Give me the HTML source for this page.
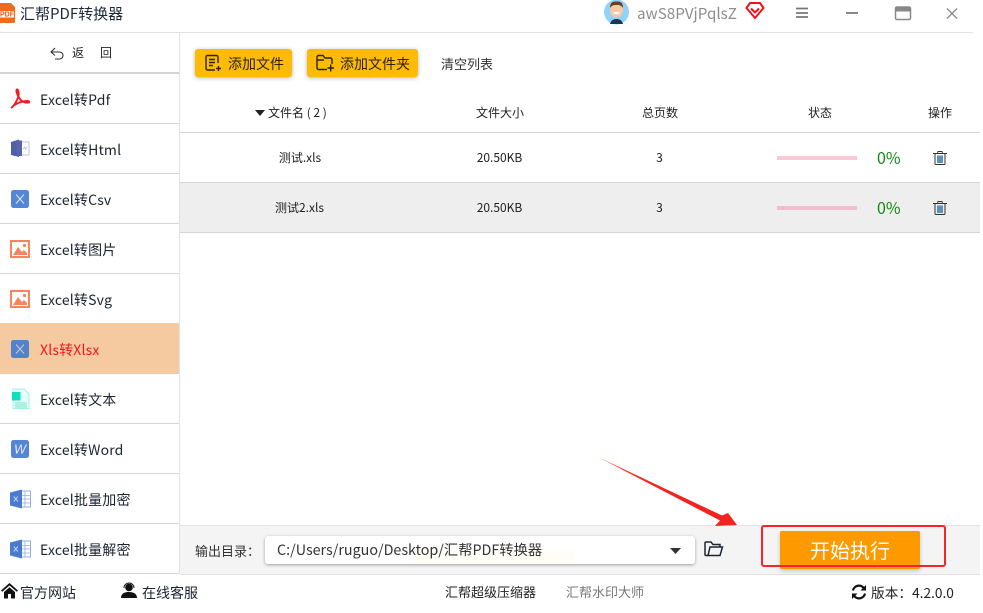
<!DOCTYPE html>
<html lang="zh"><head><meta charset="utf-8"><style>
html,body{margin:0;padding:0;background:#fff}
#p{position:relative;width:983px;height:613px;overflow:hidden;background:#fff;font-family:"Noto Sans CJK SC","Liberation Sans",sans-serif;color:#222;font-size:13px}
#p div,#p span.a,#p svg{position:absolute}
.t{white-space:nowrap;line-height:20px}
.l{background:#d5d5d5;height:1px}
.nm{left:40px;font-size:14px;white-space:nowrap;line-height:20px;color:#1c2430;letter-spacing:.18px}
.btn{background:#fdbb04;border-radius:3px;box-shadow:0 1px 4px rgba(0,0,0,.3);height:28px;top:49px}
.c{text-align:center;white-space:nowrap;line-height:20px;font-size:12px}
</style></head><body><div id="p">

<!-- logo -->
<svg style="left:0;top:2px" width="16" height="22" viewBox="0 0 16 22"><path d="M-4 1H11L15 5V19a2 2 0 0 1-2 2H-4z" fill="#ef6a1c"/><rect x="-2" y="9" width="16" height="6.500" fill="#fff"/><text x="0" y="14.700" font-family="Liberation Sans" font-size="7" font-weight="700" fill="#e8541a">PDF</text></svg>
<div class="t" style="left:20px;top:3px;font-size:15px;line-height:22px;color:#1e2a38">汇帮PDF转换器</div>

<!-- avatar -->
<svg style="left:604px;top:0" width="26" height="25" viewBox="0 0 26 25"><circle cx="12.5" cy="12" r="12.5" fill="#8fd3f8"/><path d="M6 24c1-4 4-5 6.500-5s5.500 1 6.500 5z" fill="#1d3557"/><ellipse cx="12.500" cy="10" rx="6.500" ry="7.500" fill="#f6c9a4"/><path d="M6 8c0-6 3-6.500 6.500-6.500S19 2 19 8c-2-3-4-3-6.500-3S8 5 6 8z" fill="#6b3d23"/><path d="M9 12c1 3 6 3 7 0z" fill="#fff"/></svg>
<div class="t" style="left:637px;top:3px;font-size:15.200px;color:#8d8d8d">awS8PVjPqlsZ</div>
<svg style="left:745px;top:1px" width="20" height="19" viewBox="0 0 20 19"><path d="M5 2H15L18.500 7 10 17 1.500 7z" fill="none" stroke="#f0101c" stroke-width="2"/><path d="M6 7.500l4 4 4-4" fill="none" stroke="#f0101c" stroke-width="2"/></svg>

<!-- window controls -->
<svg style="left:790px;top:0" width="190" height="30" viewBox="0 0 190 30" fill="none"><path d="M6 8.500H18M6 13H18M6 17H18" stroke="#777" stroke-width="1.800"/><path d="M56 13H68" stroke="#888" stroke-width="2"/><rect x="105.500" y="7" width="15" height="12.500" rx="1.500" stroke="#888" stroke-width="1.500"/><rect x="105" y="7" width="16" height="4.500" fill="#888"/><path d="M157 8.500L167 18.500M167 8.500L157 18.500" stroke="#888" stroke-width="1.300"/></svg>

<div style="left:0;top:32px;width:973px;height:1px;background:#e2e2e2"></div>

<!-- sidebar -->
<div style="left:179px;top:33px;width:1px;height:541px;background:#e2e2e2"></div>
<svg style="left:49px;top:46px" width="16" height="14" viewBox="0 0 16 14" fill="none"><path d="M6 2L2 6 6 9.500M2 6H10.500a3.500 3.500 0 0 1 0 7H6" stroke="#333" stroke-width="1.100"/></svg>
<div class="t" style="left:72px;top:43px;font-size:12px;color:#222">返</div>
<div class="t" style="left:100px;top:43px;font-size:12px;color:#222">回</div>
<div style="left:0;top:72px;width:179px;height:2px;background:#d5d5d5"></div>
<div class="l" style="left:0;top:123px;width:179px"></div>
<div class="l" style="left:0;top:173px;width:179px"></div>
<div class="l" style="left:0;top:223px;width:179px"></div>
<div class="l" style="left:0;top:273px;width:179px"></div>
<div style="left:0;top:323px;width:179px;height:51px;background:#f6caa0"></div>
<div class="l" style="left:0;top:423px;width:179px"></div>
<div class="l" style="left:0;top:473px;width:179px"></div>
<div class="l" style="left:0;top:523px;width:179px"></div>
<div class="l" style="left:0;top:573px;width:179px"></div>

<div class="nm" style="top:90px">Excel转Pdf</div>
<div class="nm" style="top:140px">Excel转Html</div>
<div class="nm" style="top:190px">Excel转Csv</div>
<div class="nm" style="top:240px">Excel转图片</div>
<div class="nm" style="top:290px">Excel转Svg</div>
<div class="nm" style="top:340px;color:#f5141c">Xls转Xlsx</div>
<div class="nm" style="top:390px">Excel转文本</div>
<div class="nm" style="top:440px">Excel转Word</div>
<div class="nm" style="top:490px">Excel批量加密</div>
<div class="nm" style="top:540px">Excel批量解密</div>

<!-- sidebar icons -->
<svg style="left:9px;top:88px" width="22" height="22" viewBox="0 0 22 22" fill="none"><path d="M2 20C5 18 8 13 9.500 8 10 5 9.500 1.500 8 1.500 6.500 2 8 7 11 11c2 3 6 4 9 3.500 1-.5 0-2-3-1.500-4 .5-9 2-12 4.500" stroke="#f01f24" stroke-width="1.900"/></svg>
<svg style="left:11px;top:139px" width="19" height="19" viewBox="0 0 19 19"><rect x="8" y="3" width="10" height="13" fill="#fff" stroke="#b8c2e6"/><path d="M0 3L8 .5V18L0 16z" fill="#4f5fa8"/><rect x="5" y="1.500" width="6" height="15.500" fill="#5663ad"/><path d="M12 10l1.500-2 1 2 1.500-2" stroke="#a8b4dc" fill="none" stroke-width=".7"/></svg>
<svg style="left:11px;top:190px" width="18" height="18" viewBox="0 0 18 18"><rect width="18" height="18" rx="2.500" fill="#5486d6"/><path d="M5 4.500L13 13.500M13 4.500L5 13.500" stroke="#dce7f8" stroke-width="1"/></svg>
<svg style="left:10px;top:240px" width="20" height="18" viewBox="0 0 20 18"><rect width="20" height="18" fill="#f7835f"/><rect x="2" y="2" width="16" height="14" fill="#fff"/><path d="M3 15L8 7l4 5 2-2 3 3v2z" fill="#f7835f"/><circle cx="14.500" cy="5.500" r="1.600" fill="#f7835f"/></svg>
<svg style="left:10px;top:290px" width="20" height="18" viewBox="0 0 20 18"><rect width="20" height="18" fill="#f7835f"/><rect x="2" y="2" width="16" height="14" fill="#fff"/><path d="M3 15L8 7l4 5 2-2 3 3v2z" fill="#f7835f"/><circle cx="14.500" cy="5.500" r="1.600" fill="#f7835f"/></svg>
<svg style="left:11px;top:340px" width="18" height="18" viewBox="0 0 18 18"><rect width="18" height="18" rx="2.500" fill="#5282cc"/><path d="M5 4.500L13 13.500M13 4.500L5 13.500" stroke="#c9c6c0" stroke-width="1"/></svg>
<svg style="left:11px;top:388px" width="19" height="22" viewBox="0 0 19 22" fill="none"><path d="M2 1H13L18 6V20.500H2z" fill="#e9fdf8" stroke="#9ef3de"/><rect x="1" y="4" width="8.500" height="8.500" fill="#0de0bb"/><path d="M4 15H16M4 17H16M4 19H16" stroke="#6fe8cf" stroke-width=".9"/></svg>
<svg style="left:11px;top:440px" width="18" height="18" viewBox="0 0 18 18"><rect width="18" height="18" rx="2.500" fill="#5486d6"/><text x="9" y="13.500" text-anchor="middle" font-family="Liberation Sans" font-style="italic" font-size="12.500" fill="#e3ebf9">W</text></svg>
<svg style="left:10px;top:489px" width="21" height="20" viewBox="0 0 21 20"><rect x="10" y="2" width="10.500" height="16" fill="#fff" stroke="#8fb0e8"/><path d="M10 6.500H20M10 10H20M10 14H20M15 2V18" stroke="#8fb0e8" stroke-width=".8"/><path d="M0 3.500L12 .5V19.500L0 16.500z" fill="#4a7bd0"/><path d="M3.800 7.500L7.800 12.500M7.800 7.500L3.800 12.500" stroke="#cfdcf5" stroke-width="1"/></svg>
<svg style="left:10px;top:539px" width="21" height="20" viewBox="0 0 21 20"><rect x="10" y="2" width="10.500" height="16" fill="#fff" stroke="#8fb0e8"/><path d="M10 6.500H20M10 10H20M10 14H20M15 2V18" stroke="#8fb0e8" stroke-width=".8"/><path d="M0 3.500L12 .5V19.500L0 16.500z" fill="#4a7bd0"/><path d="M3.800 7.500L7.800 12.500M7.800 7.500L3.800 12.500" stroke="#cfdcf5" stroke-width="1"/></svg>

<!-- toolbar -->
<div class="btn" style="left:195px;width:97px"></div>
<div class="btn" style="left:307px;width:111px"></div>
<svg style="left:204px;top:54px" width="18" height="18" viewBox="0 0 18 18" fill="none" stroke="#2a2410" stroke-width="1.400"><path d="M14 9V3a1.500 1.500 0 0 0-1.500-1.500H3.500A1.500 1.500 0 0 0 2 3V14.500A1.500 1.500 0 0 0 3.500 16H11"/><path d="M5 5.500H11M5 8.500H11M5 11.500H9M12 14.500H17M14.500 12V17"/></svg>
<svg style="left:316px;top:54px" width="19" height="18" viewBox="0 0 19 18" fill="none" stroke="#2a2410" stroke-width="1.400"><path d="M11 15.500H2.500A1.500 1.500 0 0 1 1 14V3A1.500 1.500 0 0 1 2.500 1.500H7L9 4H14.500A1.500 1.500 0 0 1 16 5.500V10"/><path d="M1 6H8M11.500 14H18M14.700 10.500V17.500" /></svg>
<div class="t" style="left:228px;top:54px;font-size:14px;color:#2a2410">添加文件</div>
<div class="t" style="left:340px;top:54px;font-size:14px;color:#2a2410">添加文件夹</div>
<div class="t" style="left:441px;top:54px;font-size:13px;color:#333">清空列表</div>

<!-- table -->
<svg style="left:255px;top:110px" width="10" height="6" viewBox="0 0 10 6"><path d="M0 0H10L5 6z" fill="#222"/></svg>
<div class="c" style="left:268px;top:103px;white-space:pre">文件名 ( 2 )</div>
<div class="c" style="left:440px;top:103px;width:120px">文件大小</div>
<div class="c" style="left:600px;top:103px;width:120px">总页数</div>
<div class="c" style="left:760px;top:103px;width:120px">状态</div>
<div class="c" style="left:880px;top:103px;width:120px">操作</div>
<div class="l" style="left:180px;top:132px;width:800px"></div>
<div style="left:180px;top:183px;width:800px;height:49px;background:#eee"></div>
<div class="l" style="left:180px;top:182px;width:800px"></div>
<div class="l" style="left:180px;top:232px;width:800px"></div>

<div class="c" style="left:240px;top:148px;width:120px">测试.xls</div>
<div class="c" style="left:439.500px;top:148px;width:120px">20.50KB</div>
<div class="c" style="left:599.500px;top:148px;width:120px">3</div>
<div style="left:777px;top:156px;width:80px;height:4px;background:#fbc8d8"></div>
<div class="t" style="left:877px;top:147px;font-size:16px;color:#0e8a10">0%</div>
<div class="c" style="left:239.500px;top:198px;width:120px">测试2.xls</div>
<div class="c" style="left:439.500px;top:198px;width:120px">20.50KB</div>
<div class="c" style="left:599.500px;top:198px;width:120px">3</div>
<div style="left:777px;top:206px;width:80px;height:4px;background:#f0bcce"></div>
<div class="t" style="left:877px;top:197px;font-size:16px;color:#0e8a10">0%</div>
<svg style="left:933px;top:151px" width="14" height="14" viewBox="0 0 14 14" fill="none"><path d="M0 2.500H14M4.500 2.500L5 .5H9L9.500 2.500" stroke="#333" stroke-width=".9"/><path d="M2 3V12.500a1 1 0 0 0 1 1H11a1 1 0 0 0 1-1V3" stroke="#333" stroke-width="1"/><rect x="4" y="4.500" width="6" height="7.500" fill="#5f8fc0"/></svg>
<svg style="left:933px;top:201px" width="14" height="14" viewBox="0 0 14 14" fill="none"><path d="M0 2.500H14M4.500 2.500L5 .5H9L9.500 2.500" stroke="#333" stroke-width=".9"/><path d="M2 3V12.500a1 1 0 0 0 1 1H11a1 1 0 0 0 1-1V3" stroke="#333" stroke-width="1"/><rect x="4" y="4.500" width="6" height="7.500" fill="#5f8fc0"/></svg>

<!-- bottom bar -->
<div style="left:180px;top:525px;width:800px;height:50px;background:#f4f4f4;border-top:1px solid #e2e2e2;border-bottom:1px solid #e2e2e2;box-sizing:border-box"></div>
<div class="t" style="left:195px;top:541px;font-size:13px;color:#333">输出目录：</div>
<div style="left:265px;top:536px;width:430px;height:28px;background:#fff;border-radius:3px;box-shadow:0 1px 3px rgba(0,0,0,.35)"></div>
<div style="left:415px;top:550px;width:160px;height:14px;background:#fffef6"></div>
<div class="t" style="left:277px;top:540px;font-size:14.300px;color:#333">C:/Users/ruguo/Desktop/汇帮PDF转换器</div>
<svg style="left:670px;top:548px" width="11" height="6" viewBox="0 0 11 6"><path d="M0 0H11L5.500 6z" fill="#333"/></svg>
<svg style="left:704px;top:541px" width="20" height="16" viewBox="0 0 20 16" fill="none" stroke="#1e2530" stroke-width="1.500"><path d="M4 14.500H2A1 1 0 0 1 1 13.500V2A1 1 0 0 1 2 1H7L9 3.500H16V6"/><path d="M4 14.500L6 6H18.500L16 14.500z"/></svg>
<div style="left:780px;top:531px;width:140px;height:38px;background:#ff9900;border-radius:2px;box-shadow:0 2px 4px rgba(0,0,0,.2)"></div>
<div class="t" style="left:780px;top:537px;width:140px;text-align:center;font-size:20px;line-height:26px;color:#fff">开始执行</div>
<div style="left:761px;top:525px;width:181px;height:38px;border:2px solid #f5232a;border-radius:3px"></div>

<!-- red arrow -->
<svg style="left:595px;top:455px" width="150" height="75" viewBox="0 0 150 75"><path d="M5 3L127 60.500 133 58 142 70 120 71 125 65.500z" fill="#f5231f"/></svg>

<!-- footer -->
<svg style="left:1px;top:583px" width="17" height="16" viewBox="0 0 17 16"><path d="M8.500 0L17 7.500 15.800 8.800 8.500 2.500 1.200 8.800 0 7.500zM3 9L8.500 4.200 14 9V15.500H10V11H7V15.500H3z" fill="#111"/></svg>
<div class="t" style="left:20px;top:583px;font-size:14px;color:#1c2430">官方网站</div>
<svg style="left:121px;top:582px" width="16" height="17" viewBox="0 0 16 17"><circle cx="8" cy="5.500" r="3.800" fill="#111"/><path d="M3 6a5 5 0 0 1 10 0" fill="none" stroke="#111"/><path d="M0 16c0-4 3-6 8-6s8 2 8 6z" fill="#111"/></svg>
<div class="t" style="left:142px;top:583px;font-size:14px;color:#1c2430">在线客服</div>
<div class="t" style="left:445px;top:582px;font-size:13px;color:#222">汇帮超级压缩器</div>
<div class="t" style="left:566px;top:582px;font-size:13px;color:#777">汇帮水印大师</div>
<svg style="left:851px;top:584px" width="16" height="16" viewBox="0 0 16 16" fill="none" stroke="#111" stroke-width="2.200"><path d="M2 6.500A6 6 0 0 1 13 4.500"/><path d="M14 9.500A6 6 0 0 1 3 11.500"/><path d="M15 1V6.500H9.500z" fill="#111" stroke="none"/><path d="M1 15V9.500H6.500z" fill="#111" stroke="none"/></svg>
<div class="t" style="left:871px;top:582px;font-size:13.700px;color:#222">版本：4.2.0.0</div>
</div></body></html>
